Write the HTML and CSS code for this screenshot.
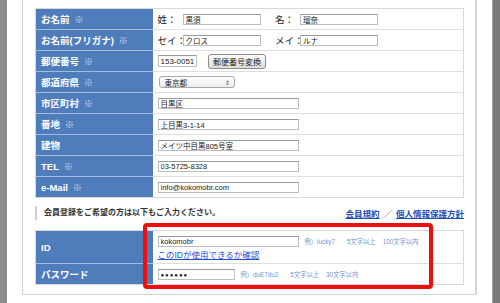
FILE: index.html
```html
<!DOCTYPE html>
<html lang="ja">
<head>
    <meta charset="UTF-8">
    <title>会員登録</title>
    <link rel="stylesheet" href="styles.css">
</head>
<body>
    <div class="screen">
        <div class="bar-left"></div>

        <div class="frame">
            <table class="form">
                <tr>
                    <th>お名前 <span class="req">※</span></th>
                    <td>
                        <span class="pre">姓：</span><input class="field name" type="text" value="黒須" readonly>
                        <span class="pre pre-2">名：</span><input class="field name" type="text" value="瑠奈" readonly>
                    </td>
                </tr>
                <tr>
                    <th>お名前(フリガナ) <span class="req">※</span></th>
                    <td>
                        <span class="pre">セイ：</span><input class="field name" type="text" value="クロス" readonly>
                        <span class="pre pre-2">メイ：</span><input class="field name" type="text" value="ルナ" readonly>
                    </td>
                </tr>
                <tr>
                    <th>郵便番号 <span class="req">※</span></th>
                    <td>
                        <input class="field zip" type="text" value="153-0051" readonly>
                        <button class="zip-btn">郵便番号変換</button>
                    </td>
                </tr>
                <tr>
                    <th>都道府県 <span class="req">※</span></th>
                    <td>
                        <span class="select">東京都<span class="arrows">&#8661;</span></span>
                    </td>
                </tr>
                <tr>
                    <th>市区町村 <span class="req">※</span></th>
                    <td><input class="field long" type="text" value="目黒区" readonly></td>
                </tr>
                <tr>
                    <th>番地 <span class="req">※</span></th>
                    <td><input class="field long" type="text" value="上目黒3-1-14" readonly></td>
                </tr>
                <tr>
                    <th>建物</th>
                    <td><input class="field long" type="text" value="メイツ中目黒805号室" readonly></td>
                </tr>
                <tr>
                    <th>TEL <span class="req">※</span></th>
                    <td><input class="field long" type="text" value="03-5725-8328" readonly></td>
                </tr>
                <tr>
                    <th>e-Mail <span class="req">※</span></th>
                    <td><input class="field long" type="text" value="info@kokomobr.com" readonly></td>
                </tr>
            </table>

            <div class="note-row">
                <p class="note">会員登録をご希望の方は以下もご入力ください。</p>
                <div class="links">
                    <a href="#">会員規約</a><span class="slash">／</span><a href="#">個人情報保護方針</a>
                </div>
            </div>

            <table class="form account">
                <tr class="id-row">
                    <th>ID</th>
                    <td>
                        <div class="line">
                            <input class="field long" type="text" value="kokomobr" readonly>
                            <span class="hint">例）lucky7</span>
                            <span class="hint">5文字以上</span>
                            <span class="hint">100文字以内</span>
                        </div>
                        <a class="check" href="#">このIDが使用できるか確認</a>
                    </td>
                </tr>
                <tr>
                    <th>パスワード</th>
                    <td>
                        <div class="line">
                            <input class="field pass" type="text" value="&#9679;&#9679;&#9679;&#9679;&#9679;&#9679;" readonly>
                            <span class="hint">例）duE7du2</span>
                            <span class="hint">5文字以上</span>
                            <span class="hint">30文字以内</span>
                        </div>
                    </td>
                </tr>
            </table>

            <!-- red marker round the account fields -->
            <div class="highlight"></div>
        </div>

        <div class="bar-right"></div>
    </div>
</body>
</html>
```

FILE: styles.css
```css
body {
    margin: 0;
    background-color: #fff;
    font-family: "Liberation Sans", "Noto Sans CJK JP", sans-serif;
    color: #333;
}

.screen {
    display: flex;
    width: 500px;
    height: 303px;
    overflow: hidden;
}

.bar-left {
    width: 7px;
    background-color: #8c8c8c;
}

.bar-right {
    width: 8px;
    margin-left: 15px;
    background-color: #7a7a7a;
    border-left: 1px solid #a5a5a5;
    box-sizing: border-box;
}

.frame {
    position: relative;
    width: 455px;
    height: 295px;
    margin-left: 15px;
    padding: 8px 11px 0 12px;
    box-sizing: border-box;
    border: 1px solid #d2d2d2;
    border-top: none;
    border-right: 2px solid #d6d6d6;
}

/* tables */
.form {
    width: 429px;
    border-collapse: collapse;
    table-layout: fixed;
    border: 1px solid #d9d9d9;
}

.form tr {
    height: 21px;
}

.form th {
    width: 117px;
    padding: 0 0 0 5px;
    background-color: #4f7dbc;
    border-bottom: 1px solid #a7bbdb;
    color: #fff;
    font-size: 9.5px;
    font-weight: bold;
    text-align: left;
    white-space: nowrap;
    box-sizing: border-box;
}

.form th .req {
    margin-left: 2px;
    color: #c9d6ea;
    font-weight: normal;
}

.form td {
    padding: 0 0 0 5px;
    border-bottom: 1px solid #dedede;
    background-color: #fff;
    font-size: 9px;
    white-space: nowrap;
}

.form tr:last-child th,
.form tr:last-child td {
    border-bottom: none;
}

.pre {
    display: inline-block;
    width: 25px;
    font-size: 9.5px;
    color: #222;
    vertical-align: middle;
}

.pre-2 {
    margin-left: 12px;
}

.field {
    height: 11px;
    margin: 0;
    padding: 0 2px;
    border: 1px solid #bdbdbd;
    border-top-color: #999;
    background-color: #fff;
    font-family: "Liberation Sans", "Noto Sans CJK JP", sans-serif;
    font-size: 7.5px;
    color: #222;
    vertical-align: middle;
    box-sizing: border-box;
    outline: none;
}

.field.name { width: 78px; }
.field.zip  { width: 39px; height: 12px; font-size: 8px; }
.field.long { width: 141px; }
.field.pass { width: 77px; font-size: 6px; letter-spacing: 1px; }

.zip-btn {
    height: 15px;
    width: 58px;
    margin: 0 0 0 9px;
    padding: 0;
    border: 1px solid #8c8c8c;
    border-radius: 3px;
    background: linear-gradient(#fdfdfd, #dcdcdc);
    font-family: "Noto Sans CJK JP", sans-serif;
    font-size: 8px;
    color: #222;
    vertical-align: middle;
}

.select {
    display: inline-flex;
    align-items: center;
    justify-content: space-between;
    width: 76px;
    height: 12px;
    margin-left: 1px;
    padding: 0 4px 0 5px;
    border: 1px solid #a8a8a8;
    border-radius: 3px;
    background: linear-gradient(#fff, #ececec);
    font-size: 7.5px;
    color: #222;
    box-sizing: border-box;
    vertical-align: middle;
}

.select .arrows {
    font-size: 6px;
    color: #555;
}

/* note and links between the two tables */
.note-row {
    display: flex;
    justify-content: space-between;
    align-items: center;
    margin: 8px 0 10px;
    height: 14px;
}

.note {
    margin: 0;
    padding-left: 7px;
    border-left: 2px solid #cfcfcf;
    font-size: 8px;
    font-weight: bold;
    line-height: 14px;
    color: #333;
}

.links {
    font-size: 8.5px;
    font-weight: bold;
}

.links a {
    color: #1f4fb8;
    text-decoration: underline;
}

.links .slash {
    margin: 0 4px;
    color: #555;
    font-weight: normal;
}

/* account table */
.account .id-row {
    height: 33px;
}

.account td {
    vertical-align: top;
    padding-top: 5px;
}

.account .line {
    display: flex;
    align-items: center;
    height: 11px;
}

.hint {
    margin-left: 6px;
    font-size: 6.3px;
    color: #6f95d6;
}

.hint + .hint {
    margin-left: 12px;
}

.hint + .hint + .hint {
    margin-left: 7px;
}

.check {
    display: block;
    margin-top: 1px;
    font-size: 8.5px;
    color: #1f4fd0;
    text-decoration: underline;
}

.highlight {
    position: absolute;
    left: 120px;
    top: 223px;
    width: 290px;
    height: 66px;
    border: 4px solid #f00d0d;
    border-radius: 4px;
    box-sizing: border-box;
}
```
